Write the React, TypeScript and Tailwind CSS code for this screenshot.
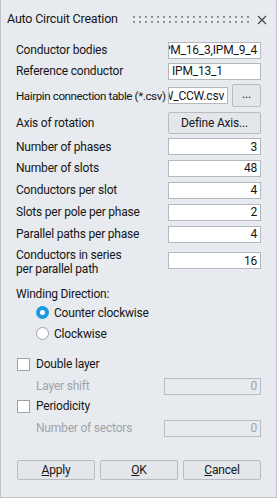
import React from "react";

const font = { fontFamily: 'Roboto, "Liberation Sans", Arial, sans-serif' };

function TextBox({
  value,
  align = "right",
  disabled = false,
  className = "",
}: {
  value: string;
  align?: "left" | "right";
  disabled?: boolean;
  className?: string;
}) {
  return (
    <div
      className={`flex h-[17px] shrink-0 items-center overflow-hidden border whitespace-nowrap px-[3px] ${
        disabled
          ? "border-[#b9bdc1] bg-[#e7ebef] text-[#a0a4a8]"
          : "border-[#b4b8bc] bg-white text-[#161616]"
      } ${align === "right" ? "justify-end" : "justify-start"} ${className}`}
    >
      <span className="shrink-0">{value}</span>
    </div>
  );
}

function Button({ children, className = "" }: { children: React.ReactNode; className?: string }) {
  return (
    <div
      className={`flex shrink-0 items-center justify-center rounded-[2px] border border-[#b8bcc0] bg-[#e3e7eb] text-[#161616] ${className}`}
    >
      {children}
    </div>
  );
}

function FieldRow({
  label,
  value,
  h = "h-[22px]",
}: {
  label: string;
  value: string;
  h?: string;
}) {
  return (
    <div className={`flex ${h} items-center justify-between`}>
      <span>{label}</span>
      <TextBox value={value} className="w-[93px]" />
    </div>
  );
}

function Radio({ checked, label }: { checked: boolean; label: string }) {
  return (
    <div className="flex h-[21px] items-center pl-[20px]">
      {checked ? (
        <span className="flex h-[13px] w-[13px] items-center justify-center rounded-full bg-[#1a9ae0]">
          <span className="h-[5px] w-[5px] rounded-full bg-white" />
        </span>
      ) : (
        <span className="h-[13px] w-[13px] rounded-full border border-[#9ea3a8] bg-white" />
      )}
      <span className="ml-[5px]">{label}</span>
    </div>
  );
}

function Check({ label }: { label: string }) {
  return (
    <div className="flex h-[20px] items-center pl-[1px]">
      <span className="h-[13px] w-[13px] border border-[#9ea3a8] bg-white" />
      <span className="ml-[6px]">{label}</span>
    </div>
  );
}

function GripDots() {
  const cols = Array.from({ length: 20 });
  return (
    <div className="flex flex-col gap-[3px]">
      {[0, 1].map((r) => (
        <div key={r} className="flex gap-[4px]">
          {cols.map((_, i) => (
            <span key={i} className="h-[2px] w-[2px] bg-[#8f9397]" />
          ))}
        </div>
      ))}
    </div>
  );
}

export default function App() {
  return (
    <div
      className="h-[498px] w-[277px] border-r border-b border-l border-[#bfc4c9] bg-[#e7ebef] text-[12px] leading-[14px] tracking-[-0.2px] text-[#161616]"
      style={font}
    >
      {/* title bar */}
      <div className="flex h-[40px] items-center pl-[6px] pr-[9px] pb-[2px]">
        <span className="text-[12.5px]">Auto Circuit Creation</span>
        <div className="ml-auto mr-[8px]">
          <GripDots />
        </div>
        <svg width="10" height="10" viewBox="0 0 10 10" className="mt-[1px]">
          <path d="M1 1L9 9M9 1L1 9" stroke="#444" strokeWidth="1.2" />
        </svg>
      </div>

      <div className="flex flex-col pl-[15px] pr-[15px]">
        <div className="flex h-[20px] items-center justify-between">
          <span>Conductor bodies</span>
          <TextBox value="IPM_16_3,IPM_9_4" className="w-[93px]" />
        </div>
        <div className="flex h-[22px] items-center justify-between">
          <span>Reference conductor</span>
          <TextBox value="IPM_13_1" align="left" className="w-[93px]" />
        </div>
        <div className="flex h-[27px] items-center justify-between whitespace-nowrap">
          <span className="text-[11.6px] tracking-[-0.4px]">Hairpin connection table (*.csv)</span>
          <div className="flex shrink-0 items-center gap-[4px]">
            <TextBox value="W_CCW.csv" className="w-[60px]" />
            <Button className="h-[23px] w-[29px] pb-[3px]">...</Button>
          </div>
        </div>
        <div className="flex h-[27px] items-center justify-between">
          <span>Axis of rotation</span>
          <Button className="h-[22px] w-[93px]">Define Axis...</Button>
        </div>
        <FieldRow label="Number of phases" value="3" h="h-[21px]" />
        <FieldRow label="Number of slots" value="48" />
        <FieldRow label="Conductors per slot" value="4" />
        <FieldRow label="Slots per pole per phase" value="2" />
        <FieldRow label="Parallel paths per phase" value="4" />
        <div className="flex h-[31px] items-center justify-between">
          <span className="pt-[2px]">
            Conductors in series
            <br />
            per parallel path
          </span>
          <TextBox value="16" className="w-[93px]" />
        </div>

        <div className="mt-[10px] flex h-[16px] items-center">Winding Direction:</div>
        <Radio checked label="Counter clockwise" />
        <Radio checked={false} label="Clockwise" />

        <div className="mt-[10px]">
          <Check label="Double layer" />
        </div>
        <div className="mt-[2px] flex h-[20px] items-center justify-between">
          <span className="pl-[20px] text-[#a0a4a8]">Layer shift</span>
          <TextBox value="0" disabled className="w-[97px]" />
        </div>
        <Check label="Periodicity" />
        <div className="mt-[2px] flex h-[20px] items-center justify-between">
          <span className="pl-[20px] text-[#a0a4a8]">Number of sectors</span>
          <TextBox value="0" disabled className="w-[97px]" />
        </div>

        <div className="mt-[22px] flex gap-[5px] pl-[1px]">
          <Button className="h-[20px] flex-1 shrink">
            <span>
              <u>A</u>pply
            </span>
          </Button>
          <Button className="h-[20px] flex-1 shrink">
            <span>
              <u>O</u>K
            </span>
          </Button>
          <Button className="h-[20px] flex-1 shrink">
            <span>
              <u>C</u>ancel
            </span>
          </Button>
        </div>
      </div>
    </div>
  );
}
